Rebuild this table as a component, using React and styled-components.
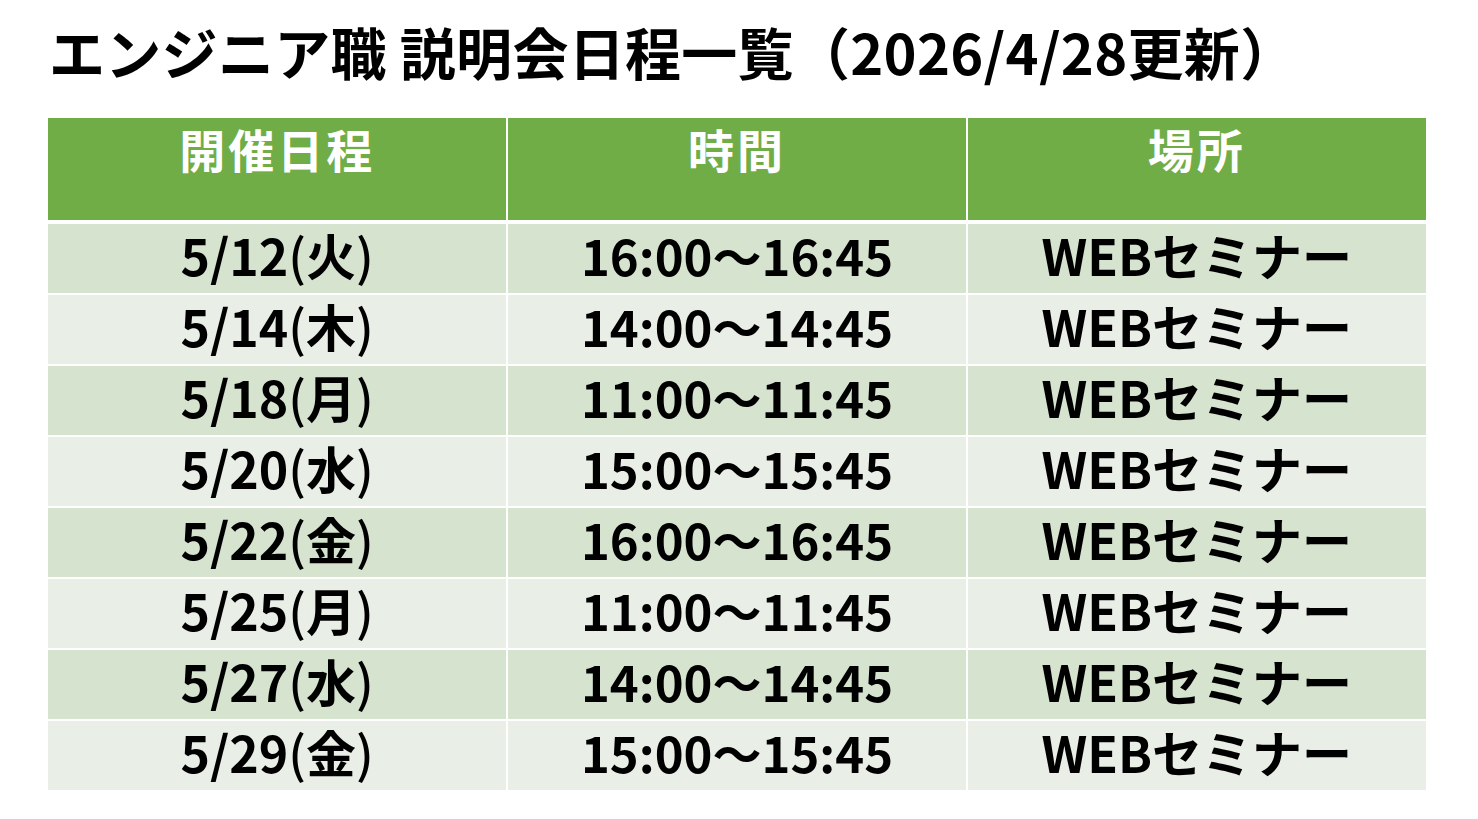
import React from "react";
import styled, { createGlobalStyle } from "styled-components";

const GlobalStyle = createGlobalStyle`
  html, body {
    margin: 0;
    padding: 0;
    background: #ffffff;
  }
  body {
    font-family: "Noto Sans CJK JP", "Noto Sans", sans-serif;
    color: #000000;
  }
`;

const Page = styled.div`
  width: 1478px;
  height: 819px;
  padding: 16px 52px 0 48px;
  box-sizing: border-box;
`;

const Title = styled.h1`
  margin: 0 0 0 1px;
  font-size: 56px;
  font-weight: 700;
  line-height: 70px;
  letter-spacing: 0.3px;
  white-space: nowrap;
`;

const Table = styled.table`
  margin-top: 32px;
  width: 1378px;
  border-collapse: collapse;
  table-layout: fixed;
`;

const HeadCell = styled.th`
  height: 104px;
  padding: 0;
  background: #70ad47;
  color: #ffffff;
  font-size: 46px;
  font-weight: 700;
  line-height: 1;
  vertical-align: top;
  padding-top: 7px;
  box-sizing: border-box;
  border-left: 2px solid #ffffff;
  border-bottom: 4px solid #ffffff;
  letter-spacing: 3px;

  &:first-child {
    border-left: none;
  }
`;

const Row = styled.tr`
  background: ${(p) => (p.$odd ? "#d5e3cf" : "#e9efe7")};
  border-top: 2px solid #ffffff;

  &:first-child {
    border-top: none;
  }
`;

const Cell = styled.td`
  height: 60px;
  padding: 0 0 9px;
  text-align: center;
  vertical-align: middle;
  font-size: ${(p) => (p.$narrow ? "49px" : "50px")};
  font-weight: 700;
  line-height: 1;
  border-left: 2px solid #ffffff;
  white-space: nowrap;

  &:first-child {
    border-left: none;
  }
`;

const Paren = styled.span`
  font-weight: 500;
`;

const rows = [
  ["5/12", "火", "16:00～16:45"],
  ["5/14", "木", "14:00～14:45"],
  ["5/18", "月", "11:00～11:45"],
  ["5/20", "水", "15:00～15:45"],
  ["5/22", "金", "16:00～16:45"],
  ["5/25", "月", "11:00～11:45"],
  ["5/27", "水", "14:00～14:45"],
  ["5/29", "金", "15:00～15:45"],
];

export default function App() {
  return (
    <>
      <GlobalStyle />
      <Page>
        <Title>エンジニア職 説明会日程一覧（2026/4/28更新）</Title>
        <Table>
          <thead>
            <tr>
              <HeadCell>開催日程</HeadCell>
              <HeadCell>時間</HeadCell>
              <HeadCell>場所</HeadCell>
            </tr>
          </thead>
          <tbody>
            {rows.map(([date, day, time], i) => (
              <Row key={date} $odd={i % 2 === 0}>
                <Cell>
                  {date}
                  <Paren>(</Paren>
                  {day}
                  <Paren>)</Paren>
                </Cell>
                <Cell $narrow>{time}</Cell>
                <Cell>WEBセミナー</Cell>
              </Row>
            ))}
          </tbody>
        </Table>
      </Page>
    </>
  );
}
